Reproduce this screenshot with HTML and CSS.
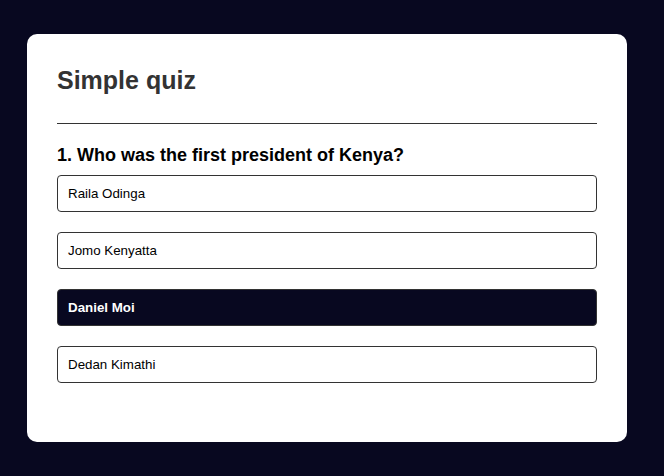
FILE: index.html
```html
<!DOCTYPE html>
<html lang="en">
<head>
<meta charset="utf-8">
<title>Simple quiz</title>
<link rel="stylesheet" href="styles.css">
</head>
<body>
<div class="app">
  <h1 class="title">Simple quiz</h1>
  <hr class="rule">
  <div class="quiz">
    <h2 class="question">1. Who was the first president of Kenya?</h2>
    <div class="answers">
      <button class="btn">Raila Odinga</button>
      <button class="btn">Jomo Kenyatta</button>
      <button class="btn selected">Daniel Moi</button>
      <button class="btn">Dedan Kimathi</button>
    </div>
  </div>
</div>
</body>
</html>
```
FILE: styles.css
```css
* { box-sizing: border-box; }
html, body { margin: 0; padding: 0; }
body {
  background: #080820;
  font-family: "Liberation Sans", Arial, sans-serif;
  min-height: 476px;
  padding: 34px 0 0 27px;
}
.app {
  background: #fff;
  width: 600px;
  height: 408px;
  border-radius: 10px;
  padding: 30px;
}
.title {
  margin: 0;
  font-size: 25px;
  font-weight: bold;
  color: #333;
  line-height: 30px;
  padding-top: 1px;
}
.rule {
  border: 0;
  border-top: 1px solid #333;
  margin: 28px 0 0;
  height: 0;
}
.question {
  margin: 20px 0 0;
  font-size: 18px;
  font-weight: bold;
  color: #000;
  line-height: 22px;
}
.answers {
  display: flex;
  flex-direction: column;
  gap: 20px;
  margin-top: 9px;
}
.btn {
  display: block;
  width: 100%;
  height: 37px;
  background: #fff;
  color: #000;
  border: 1px solid #333;
  border-radius: 4px;
  text-align: left;
  padding: 0 10px;
  font-family: "Liberation Sans", Arial, sans-serif;
  font-size: 13.333px;
}
.btn.selected {
  background: #080820;
  color: #fff;
  font-weight: bold;
}
```
